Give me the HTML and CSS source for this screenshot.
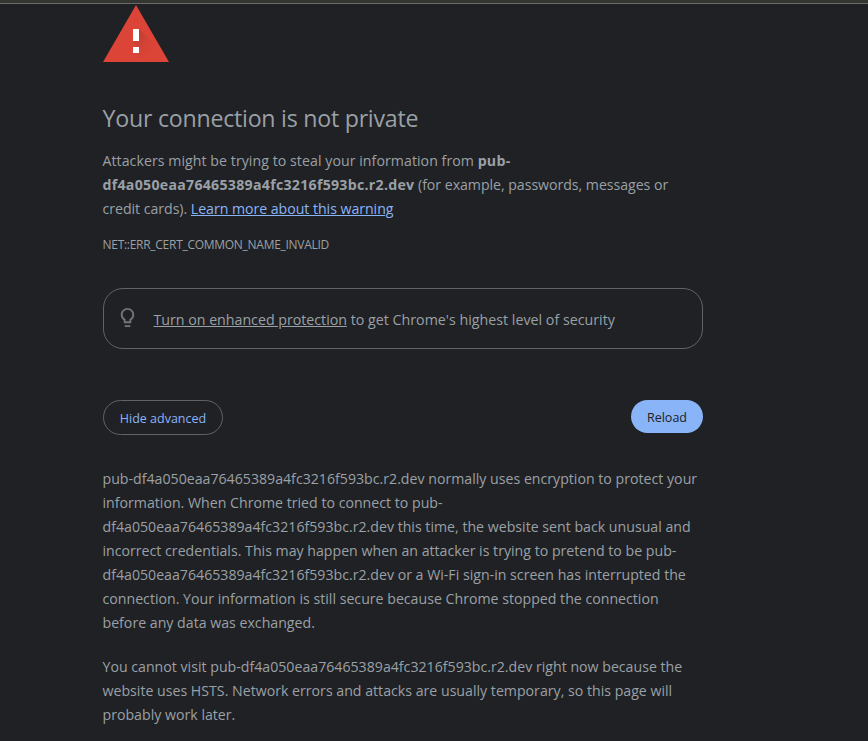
FILE: index.html
```
<!DOCTYPE html>
<html lang="en">
<head>
    <meta charset="UTF-8">
    <meta name="viewport" content="width=device-width, initial-scale=1.0">
    <title>Privacy error</title>
    <link rel="stylesheet" href="styles.css">
</head>
<body>
    <div class="toolbar-edge"></div>
    <main class="interstitial">
        <svg class="warning-icon" width="66" height="57" viewBox="0 0 66 57" aria-hidden="true">
            <defs>
                <linearGradient id="shade" gradientUnits="userSpaceOnUse" x1="32" y1="28" x2="52" y2="48">
                    <stop offset="0" stop-color="#a83a30" stop-opacity=".65"/>
                    <stop offset="1" stop-color="#db4437" stop-opacity="0"/>
                </linearGradient>
            </defs>
            <path fill="#db4437" d="M33 0 66 57H0z"/>
            <path fill="url(#shade)" d="M36 24 53.500 41.500 62.500 57H40.500L30 47.500V42H34L30 36z"/>
            <path fill="#fff" d="M30 24h6v12h-6zM30 42h6v6h-6z"/>
        </svg>

        <h1>Your connection is not private</h1>
        <p class="summary">
            <span class="lead">Attackers might be trying to steal your information from</span> <strong>pub-<br>df4a050eaa76465389a4fc3216f593bc.r2.dev</strong> (for example, passwords, messages or<br>
            credit cards). <a class="learn-more" href="#">Learn more about this warning</a>
        </p>
        <div class="error-code">NET::ERR_CERT_COMMON_NAME_INVALID</div>

        <div class="protection">
            <svg class="bulb" width="23" height="23" viewBox="0 0 24 24" fill="#757575" aria-hidden="true">
                <path d="M9 21c0 .55.450 1 1 1h4c.55 0 1-.45 1-1v-1H9v1zm3-19C8.140 2 5 5.140 5 9c0 2.380 1.190 4.470 3 5.740V17c0 .55.450 1 1 1h6c.55 0 1-.45 1-1v-2.260c1.810-1.270 3-3.360 3-5.740 0-3.860-3.140-7-7-7zm2.850 11.100-.85.600V16h-4v-2.300l-.85-.6A4.997 4.997 0 0 1 7 9c0-2.760 2.240-5 5-5s5 2.240 5 5c0 1.630-.8 3.160-2.150 4.100z"/>
            </svg>
            <p><a href="#">Turn on enhanced protection</a> to get Chrome's highest level of security</p>
        </div>

        <div class="buttons">
            <button class="details-btn">Hide advanced</button>
            <button class="primary-btn">Reload</button>
        </div>

        <div class="details">
            <p>
                pub-df4a050eaa76465389a4fc3216f593bc.r2.dev normally uses encryption to protect your<br>
                information. When Chrome tried to connect to pub-<br>
                df4a050eaa76465389a4fc3216f593bc.r2.dev this time, the website sent back unusual and<br>
                incorrect credentials. This may happen when an attacker is trying to pretend to be pub-<br>
                df4a050eaa76465389a4fc3216f593bc.r2.dev or a Wi-Fi sign-in screen has interrupted the<br>
                connection. Your information is still secure because Chrome stopped the connection<br>
                before any data was exchanged.
            </p>
            <p>
                You cannot visit pub-df4a050eaa76465389a4fc3216f593bc.r2.dev right now because the<br>
                website uses HSTS. Network errors and attacks are usually temporary, so this page will<br>
                probably work later.
            </p>
        </div>
    </main>
</body>
</html>
```
FILE: styles.css
```
* {
    margin: 0;
    padding: 0;
    box-sizing: border-box;
}

body {
    height: 741px;
    overflow: hidden;
    background: #202124;
    color: #9aa0a6;
    font-family: 'Segoe UI', 'Open Sans', 'Noto Sans', sans-serif;
    font-size: 14.17px;
    line-height: 24px;
    white-space: nowrap;
}

.toolbar-edge {
    height: 4px;
    background: #353632;
    border-bottom: 1px solid #6a6a69;
}

.interstitial {
    width: 600px;
    margin: 1px 0 0 103px;
}

.warning-icon {
    display: block;
}

h1,
.summary,
.error-code,
.details {
    margin-left: -0.5px;
}

h1 {
    margin-top: 41px;
    font-size: 23.2px;
    font-weight: 400;
    letter-spacing: -0.25px;
    line-height: 30px;
}

.summary {
    margin-top: 16px;
    letter-spacing: -0.04px;
}

.summary .lead {
    letter-spacing: 0.05px;
}

.summary strong {
    letter-spacing: 0.27px;
}

.learn-more {
    color: #8ab4f8;
}

.error-code {
    margin-top: 12px;
    font-size: 12px;
    letter-spacing: -0.28px;
    line-height: 24px;
}

.protection {
    display: flex;
    align-items: center;
    height: 61px;
    margin-top: 31px;
    padding: 0 12px;
    border: 1px solid #5f6368;
    border-radius: 20px;
}

.bulb {
    flex: none;
    margin: 0 14.5px 2px 0;
}

.protection p {
    padding-top: 2px;
    font-size: 14.26px;
}

.protection a {
    color: inherit;
    letter-spacing: -0.03px;
}

.buttons {
    display: flex;
    justify-content: space-between;
    align-items: flex-start;
    margin-top: 51px;
}

.buttons button {
    padding-top: 2px;
    font: inherit;
    font-size: 12.5px;
    border-radius: 20px;
    cursor: pointer;
}

.details-btn {
    width: 120px;
    height: 35px;
    background: transparent;
    border: 1px solid #5f6368;
    color: #8ab4f8;
}

.primary-btn {
    width: 72px;
    height: 33px;
    background: #8ab4f8;
    border: none;
    color: #202124;
}

.details {
    margin-top: 32px;
}

.details p + p {
    margin-top: 20px;
}
```
